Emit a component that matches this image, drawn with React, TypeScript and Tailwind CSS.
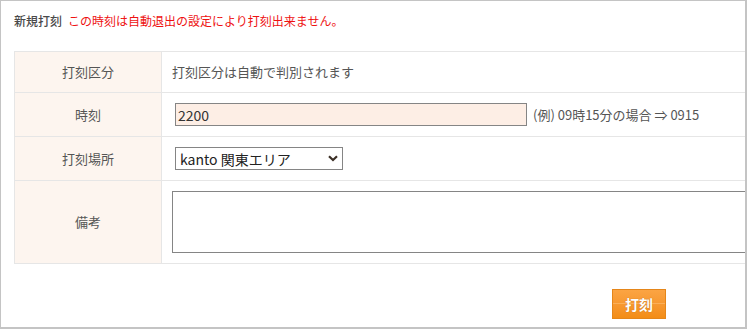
import React from "react";

const font = { fontFamily: '"Noto Sans CJK JP", "Noto Sans", sans-serif' };

function Row({ label, h, children }: { label: string; h: string; children: React.ReactNode }) {
  return (
    <div className={`flex border-b border-[#e6e6e6] ${h}`}>
      <div className="w-[147px] shrink-0 bg-[#fdf5ef] border-r border-[#e6e6e6] flex items-center justify-center text-[13px] text-[#555]">
        {label}
      </div>
      <div className="flex-1 flex items-center pl-[10px] text-[13px] text-[#555]">{children}</div>
    </div>
  );
}

export default function App() {
  return (
    <div
      className="w-[747px] h-[329px] overflow-hidden bg-white border-t border-l border-r-2 border-b-2 border-[#c4c4c4]"
      style={font}
    >
      <div className="h-[50px] pl-[13px] pt-[12px] text-[12px] leading-[16px]">
        <span className="text-[#4a4a4a] font-medium">新規打刻</span>
        <span className="ml-[6px] text-[#ee1111]">この時刻は自動退出の設定により打刻出来ません。</span>
      </div>
      <div className="ml-[13px] w-[780px] border-t border-l border-[#e6e6e6]">
        <Row label="打刻区分" h="h-[41px]">
          <span>打刻区分は自動で判別されます</span>
        </Row>
        <Row label="時刻" h="h-[44px]">
          <input
            className="ml-[3px] w-[352px] h-[23px] bg-[#fdeee5] border border-[#858585] px-[2px] text-[14px] text-[#333] outline-none"
            defaultValue="2200"
            style={font}
          />
          <span className="ml-[6px]">(例) 09時15分の場合 ⇒ 0915</span>
        </Row>
        <Row label="打刻場所" h="h-[44px]">
          <div className="relative ml-[3px] w-[168px] h-[23px]">
            <select
              className="appearance-none w-full h-full border border-[#858585] bg-white pl-[4px] text-[14px] leading-[20px] text-[#222] outline-none"
              style={font}
              defaultValue="kanto"
            >
              <option value="kanto">kanto 関東エリア</option>
            </select>
            <svg
              className="absolute right-[5px] top-[8px] pointer-events-none"
              width="10"
              height="7"
              viewBox="0 0 10 7"
            >
              <path d="M1 1.2 L5 5 L9 1.2" fill="none" stroke="#3b2f25" strokeWidth="2.2" />
            </svg>
          </div>
        </Row>
        <Row label="備考" h="h-[83px]">
          <textarea className="w-[600px] h-[62px] border border-[#858585] bg-white resize-none outline-none" />
        </Row>
      </div>
      <div className="pl-[611px] pt-[25px]">
        <button
          className="relative w-[54px] h-[30px] border border-[#e5861a] bg-gradient-to-b from-[#fba443] to-[#f38d15] text-white text-[14px] font-bold leading-[28px] [text-shadow:0_0_1px_rgba(120,60,0,0.5)]"
          style={font}
        >
          <span className="absolute left-0 right-0 top-[13px] h-px bg-[#fcb86a] opacity-70" />
          <span className="relative">打刻</span>
        </button>
      </div>
    </div>
  );
}
